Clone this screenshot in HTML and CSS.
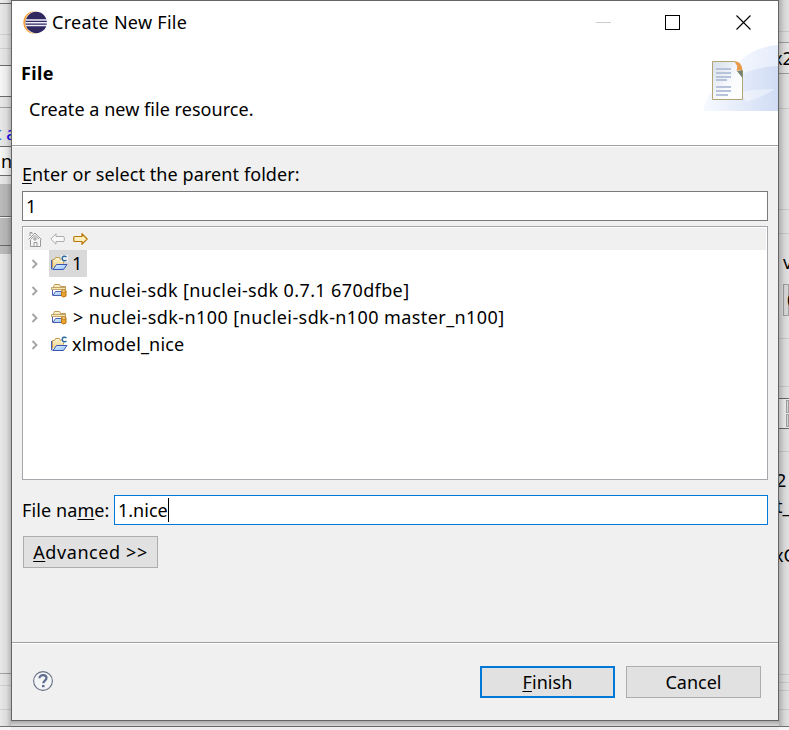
FILE: index.html
```html
<!DOCTYPE html>
<html lang="en">
<head>
<meta charset="utf-8">
<title>Create New File</title>
<link rel="stylesheet" href="styles.css">
</head>
<body>
<svg class="defs" width="0" height="0">
  <defs>
    <linearGradient id="tan" x1="0" y1="0" x2="0" y2="1"><stop offset="0" stop-color="#fff6d0"/><stop offset="1" stop-color="#efcf88"/></linearGradient>
    <linearGradient id="blue" x1="0" y1="0" x2="1" y2="1"><stop offset="0" stop-color="#e4f2ff"/><stop offset="1" stop-color="#8fc0f2"/></linearGradient>
    <symbol id="folder" viewBox="0 0 17 16">
      <path d="M1.500 12.500V4.500h2l1-2h4l1 2h3v4" fill="url(#tan)" stroke="#c19a55"/>
      <path d="M.5 5v9h1.500" fill="none" stroke="#4a62b4"/>
      <path d="M2 14.500L5.500 9.500h10.500L12.500 14.500z" fill="url(#blue)" stroke="#3c55b4"/>
    </symbol>
    <symbol id="cproject" viewBox="0 0 17 16">
      <use href="#folder"/>
      <path d="M10 0h7v7h-7z" fill="#fff" opacity=".65"/>
      <path d="M15.500 1.800C13.500.5 11.200 1.200 11.200 3.500s2.300 3 4.300 1.700" fill="none" stroke="#2b6a9e" stroke-width="1.500"/>
    </symbol>
    <symbol id="repo" viewBox="0 0 17 16">
      <path d="M2.500 6V4.500l1-2h5l1 2h5V9" fill="url(#tan)" stroke="#c19a55"/>
      <path d="M.5 5.500h14v2H.5z" fill="#fbe9ae" stroke="#b4925d" stroke-width=".8"/>
      <path d="M1.500 8v5.500" stroke="#4a5fb2"/>
      <path d="M2 13.500L4.500 9.500h7v4z" fill="url(#blue)" stroke="#4a5fb2"/>
      <path d="M10.500 9v5q2 2 4.500 0V9z" fill="#eaa42f" stroke="#bd7413"/>
      <ellipse cx="12.750" cy="9" rx="2.250" ry="1.200" fill="#fff0b4" stroke="#bd7413"/>
    </symbol>
    <symbol id="chevron" viewBox="0 0 8 10"><path d="M1.500 1l4 4-4 4" fill="none" stroke="#a2a2a2" stroke-width="1.800"/></symbol>
  </defs>
</svg>
<div class="screen">
  <div class="behind left">
    <i class="h3 pale"></i><i class="line dark"></i><i class="h30"></i><i class="line"></i><i class="h13"></i><i class="line"></i><i class="h16"></i>
    <i class="line dark"></i><i class="h30 white"></i><i class="line dark"></i><i class="h10"></i><i class="line mid"></i>
    <span class="code"><b>t</b> a</span><i class="line dark"></i><span class="cell">n</span><i class="line dark"></i>
    <i class="h8"></i><i class="h32 gray"></i><i class="line dark"></i><i class="line white"></i><i class="h27 gray"></i><i class="line dark"></i><i class="h8 gray"></i>
    <i class="grow"></i><i class="line mid"></i><i class="h11"></i><i class="line"></i><i class="h23"></i><i class="line"></i><i class="h16"></i><i class="line dark"></i><i class="h3 pale"></i>
  </div>
  <main class="dialog">
    <header class="titlebar">
      <svg class="logo" width="24" height="24" viewBox="0 0 24 24">
        <circle cx="11.500" cy="11.500" r="11.200" fill="#f5a43c"/>
        <circle cx="13.500" cy="11.500" r="11.300" fill="#fff"/>
        <circle cx="13.200" cy="11.500" r="10.700" fill="#302960"/>
        <path d="M3 9h21M2.500 11.700h21.500M3 14.500h21" stroke="#f0eff7" stroke-width="1.500"/>
      </svg>
      <span class="caption">Create New File</span>
      <svg class="controls" width="156" height="16" viewBox="0 0 156 16" shape-rendering="crispEdges">
        <path d="M0 7.500h15" stroke="#ccc"/>
        <path d="M69.500 .5h14v14h-14z" fill="none" stroke="#000"/>
        <path d="M140.500 .5l14 14M154.500 .5l-14 14" stroke="#000" shape-rendering="auto" stroke-width="1.100"/>
      </svg>
    </header>
    <section class="banner">
      <div class="intro"><h1>File</h1><p>Create a new file resource.</p></div>
      <svg class="art" width="75" height="67" viewBox="0 0 75 67">
        <defs>
          <linearGradient id="sky"><stop offset="0" stop-color="#f8faff"/><stop offset="1" stop-color="#d0dcf4"/></linearGradient>
          <linearGradient id="sky2"><stop offset="0" stop-color="#f8faff"/><stop offset="1" stop-color="#e5ecfa"/></linearGradient>
          <linearGradient id="page" x1="0" y1="0" x2="1" y2="1"><stop offset="0" stop-color="#d5deea"/><stop offset=".6" stop-color="#fafbfd"/><stop offset="1" stop-color="#fff"/></linearGradient>
        </defs>
        <path d="M20 40Q38 4 75 1v66H20z" fill="url(#sky2)"/>
        <path d="M0 67Q4 45 25 37Q48 23 75 22v45z" fill="url(#sky)"/>
        <path d="M38 48Q55 45 72 45Q60 53 43 58z" fill="#fff" opacity=".4"/>
        <path d="M9.500 17.500h22l8 9v29h-30z" fill="url(#page)" stroke="#b1a573"/>
        <path d="M13 25h15M13 29h15M13 33h15M13 36h11M13 43h15M13 47h15M13 51h12" stroke="#b7c3da" stroke-width="2"/>
        <path d="M34 27l5.500-1v8z" fill="#74806e"/>
        <path d="M31 17q8 0 8.500 10q-2-2-6 0q2-6-2.500-10z" fill="#e99a49"/>
      </svg>
    </section>
    <section class="content">
      <label class="folder-label"><u>E</u>nter or select the parent folder:</label>
      <div class="field parent">1</div>
      <div class="tree">
        <div class="toolbar">
          <svg width="14" height="16" viewBox="0 0 14 16" fill="#f5f5f5" stroke="#999"><path d="M2.500 8v7.500h10V8"/><path d="M2 5V1.500h2V3"/><path d="M.5 8.500L7 2l6.500 6.500"/><path d="M3 8L7 4.500 11 8" fill="none"/><path d="M6 7h2v2H6zM6 11.500h3v4H6z"/></svg>
          <svg width="15" height="12" viewBox="0 0 15 12"><path d="M.8 6L6 .8v2.700h7q1.300 0 1.300 1v3q0 1-1.300 1H6v2.700z" fill="#f8f8f8" stroke="#ababab"/></svg>
          <svg width="15" height="12" viewBox="0 0 15 12"><path d="M14.200 6L9 .8v2.700H2q-1.300 0-1.300 1v3q0 1 1.300 1h7v2.700z" fill="#fff0bd" stroke="#b97708" stroke-width="1.200"/></svg>
        </div>
        <div class="row"><svg class="chevron"><use href="#chevron"/></svg><span class="item selected"><svg><use href="#cproject"/></svg><span>1</span></span></div>
        <div class="row"><svg class="chevron"><use href="#chevron"/></svg><span class="item"><svg><use href="#repo"/></svg><span class="t2">&gt; nuclei-sdk [nuclei-sdk 0.7.1 670dfbe]</span></span></div>
        <div class="row"><svg class="chevron"><use href="#chevron"/></svg><span class="item"><svg><use href="#repo"/></svg><span class="t3">&gt; nuclei-sdk-n100 [nuclei-sdk-n100 master_n100]</span></span></div>
        <div class="row"><svg class="chevron"><use href="#chevron"/></svg><span class="item"><svg><use href="#cproject"/></svg><span class="t4">xlmodel_nice</span></span></div>
      </div>
      <div class="name-row"><label>File na<u>m</u>e:</label><div class="field name"><span>1.nice</span><i class="caret"></i></div></div>
      <div class="button advanced"><span><u>A</u>dvanced &gt;&gt;</span></div>
    </section>
    <footer>
      <svg width="20" height="20" viewBox="0 0 20 20"><circle cx="10" cy="10" r="9.400" fill="#f3f4f6" stroke="#667085" stroke-width="1.100"/><path d="M6.500 7.200C6.500 3 13.500 3.300 13.500 7c0 2.400-3.200 2.700-3.200 5.200" fill="none" stroke="#5d6b91" stroke-width="2.200"/><path d="M9 14h2.500v2.200H9z" fill="#5d6b91"/></svg>
      <div class="button primary"><span><u>F</u>inish</span></div>
      <div class="button"><span>Cancel</span></div>
    </footer>
  </main>
  <div class="behind right">
    <i class="h31"></i><i class="line"></i><i class="h10"></i><i class="line mid"></i><span class="frag x2">x2</span><i class="line mid"></i><i class="h34"></i><i class="line"></i>
    <i class="h100"></i><i class="line"></i><i class="h23"></i><i class="line"></i><span class="frag v">v</span><span class="choice">0</span>
    <i class="h22"></i><i class="line"></i><i class="h47"></i><i class="line"></i><i class="h11"></i><i class="line dark"></i>
    <div class="spinner"><i></i><i></i></div><i class="line dark"></i><i class="h22"></i><i class="line"></i>
    <span class="frag two">2</span><span class="frag tee">t_</span><span class="frag xc">xC</span>
    <i class="grow"></i><i class="line"></i><i class="h7"></i><i class="line"></i><i class="h7"></i><i class="line"></i><i class="h18"></i><i class="line"></i><i class="h16"></i><i class="line dark"></i><i class="h3 pale"></i>
  </div>
</div>
</body>
</html>
```
FILE: styles.css
```css
* { box-sizing: border-box; }
body { margin: 0; font: 18px/27px "Noto Sans", "Open Sans", sans-serif; color: #000; overflow: hidden; }
svg { display: block; flex: none; }
.defs { position: absolute; }
u { text-decoration-thickness: 1px; text-underline-offset: 2px; text-decoration-skip-ink: none; }
.screen { display: grid; grid-template-columns: 11px 768px 10px; width: 789px; height: 730px; background: linear-gradient(#a8a8a8 721px, #b4b4b4 722px, #d8d8d8 726px, #666 726px 727px, #eee 727px); }

/* Slivers of the window behind the dialog */
.behind { display: flex; flex-direction: column; height: 730px; overflow: hidden; position: relative; background: #f0f0f0; }
.behind::after { content: ""; position: absolute; inset: 0 0 4px; }
.left::after { background: linear-gradient(to right, rgba(0,0,0,.03), rgba(0,0,0,.09) 60%, rgba(0,0,0,.24)); }
.right::after { background: linear-gradient(to left, rgba(0,0,0,.06), rgba(0,0,0,.12) 50%, rgba(0,0,0,.27)); }
.behind i { display: block; flex: none; }
.behind .grow { flex: 1; }
.line { height: 1px; background: #d8d8d8; }
.behind .mid { background: #a8a8a8; }
.behind .dark { background: #707070; }
.behind .white { background: #fff; }
.behind .pale { background: #f5f5f5; }
.behind .gray { background: #c2c2c2; }
.h3 { height: 3px; } .h7 { height: 7px; } .h8 { height: 8px; } .h10 { height: 10px; }
.h11 { height: 11px; } .h13 { height: 13px; } .h16 { height: 16px; } .h18 { height: 18px; }
.h22 { height: 22px; } .h23 { height: 23px; } .h27 { height: 27px; } .h30 { height: 30px; }
.h31 { height: 31px; } .h32 { height: 32px; } .h34 { height: 34px; } .h47 { height: 47px; } .h100 { height: 100px; }
.code { height: 38px; line-height: 50px; color: #10f; white-space: nowrap; margin-left: -5px; flex: none; }
.code b { color: #2a78d0; font-weight: 400; }
.cell { height: 28px; line-height: 29px; background: #fff; padding-left: 1px; flex: none; }
.frag { white-space: nowrap; flex: none; margin-left: -5px; height: 27px; }
.x2 { height: 30px; line-height: 30px; background: #f3f3f3; margin: 0; text-indent: -6px; }
.v { height: 50px; line-height: 56px; margin-left: 4px; }
.choice { height: 32px; flex: none; margin-left: 4px; border: 1px solid #aaa; line-height: 30px; padding-left: 3px; background: #e8e8e8; }
.spinner { height: 29px; padding: 1px 0 1px 7px; display: flex; flex-direction: column; gap: 1px; background: #fff; flex: none; }
.spinner i { height: 13px; border: 1px solid #aaa; background: #e8e8e8; }
.two { height: 28px; line-height: 56px; margin-left: -3px; }
.tee { line-height: 52px; margin-left: -3px; }
.xc { height: 48px; line-height: 96px; }

.dialog { display: flex; flex-direction: column; height: 721px; border: 1px solid #656565; background: #f0f0f0; }
.titlebar { display: flex; align-items: center; height: 43px; background: #fff; padding-left: 11px; }
.logo { margin-right: 5px; }
.caption { letter-spacing: .27px; }
.controls { margin: 1px 26px 0 auto; }
.banner { display: flex; height: 101px; background: #fff; }
.intro { flex: 1; padding: 16px 0 0 9px; }
h1 { margin: 0; font-size: 18px; line-height: 27px; letter-spacing: .4px; }
p { margin: 9px 0 0 8px; line-height: 27px; letter-spacing: .04px; }
.content { border-top: 1px solid #a0a0a0; box-shadow: inset 0 1px #fff; height: 497px; padding: 15px 10px 0; display: flex; flex-direction: column; }
.folder-label { height: 30px; line-height: 27px; letter-spacing: .09px; }
.field { height: 30px; border: 1px solid #7a7a7a; background: #fff; padding-left: 3px; line-height: 28px; }
.tree { height: 254px; margin-top: 5px; border: 1px solid #a5a7ac; padding: 1px; background: #fff; }
.toolbar { display: flex; align-items: center; height: 22px; background: #f0f0f0; padding-left: 4px; gap: 8px; }
.row { display: flex; align-items: center; height: 27px; padding-left: 7px; }
.chevron { width: 8px; height: 10px; margin: 1px 10px 0 0; }
.item { display: flex; align-items: center; height: 27px; padding: 0 5px 0 2px; }
.item svg { width: 17px; height: 16px; margin: 0 4px 2px 0; }
.selected { background: #d9d9d9; }
.t2 { letter-spacing: .38px; margin-left: 1px; }
.t3 { letter-spacing: .41px; margin-left: 1px; }
.t4 { letter-spacing: .17px; }
.name-row { display: flex; margin-top: 15px; line-height: 30px; }
.name-row label { width: 92px; white-space: nowrap; letter-spacing: .1px; }
.name { flex: 1; border-color: #0078d7; display: flex; }
.caret { width: 1px; height: 24px; margin-top: 2px; background: #000; }
.button { width: 135px; height: 32px; border: 1px solid #adadad; background: #e1e1e1; line-height: 30px; text-align: center; }
.advanced { margin: 11px 0 0 1px; letter-spacing: .6px; }
footer { display: flex; border-top: 1px solid #a0a0a0; box-shadow: inset 0 1px #fff; padding: 23px 17px 0 21px; gap: 11px; }
footer svg { margin: 5px auto 0 0; }
.primary { border: 2px solid #0078d7; line-height: 28px; letter-spacing: .1px; }
```
